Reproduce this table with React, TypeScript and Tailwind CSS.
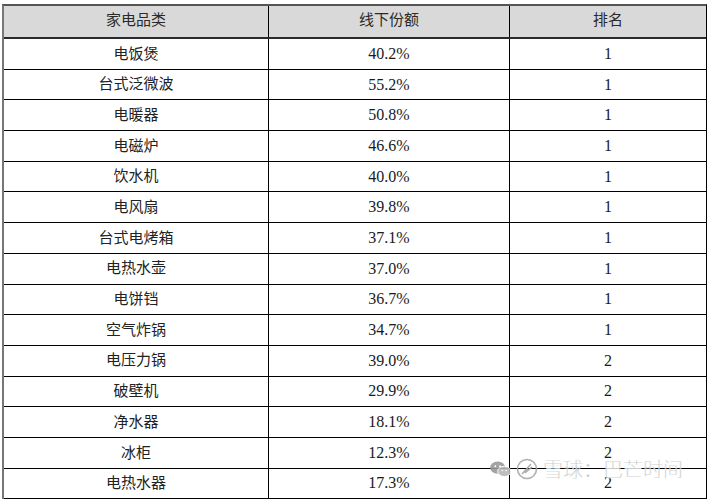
import React from "react"

const rows: [string, string, string][] = [
  ["电饭煲", "40.2%", "1"],
  ["台式泛微波", "55.2%", "1"],
  ["电暖器", "50.8%", "1"],
  ["电磁炉", "46.6%", "1"],
  ["饮水机", "40.0%", "1"],
  ["电风扇", "39.8%", "1"],
  ["台式电烤箱", "37.1%", "1"],
  ["电热水壶", "37.0%", "1"],
  ["电饼铛", "36.7%", "1"],
  ["空气炸锅", "34.7%", "1"],
  ["电压力锅", "39.0%", "2"],
  ["破壁机", "29.9%", "2"],
  ["净水器", "18.1%", "2"],
  ["冰柜", "12.3%", "2"],
  ["电热水器", "17.3%", "2"],
]

const font = { fontFamily: '"Liberation Serif", "Noto Sans CJK SC", serif' }

function Watermark() {
  return (
    <div className="absolute left-[490px] top-[458px] flex items-center gap-[5px] text-[#b4b4b4] opacity-90 pointer-events-none">
      {/* wechat bubbles */}
      <svg width="21" height="17" viewBox="0 0 22 18">
        <ellipse cx="8" cy="7" rx="8" ry="6.5" fill="#9a9a9a" />
        <ellipse cx="15" cy="11" rx="7" ry="5.5" fill="#b8b8b8" stroke="#fff" strokeWidth="1" />
        <circle cx="5.5" cy="5.5" r="1" fill="#fff" />
        <circle cx="10.5" cy="5.5" r="1" fill="#fff" />
        <circle cx="13" cy="10" r="0.8" fill="#fff" />
        <circle cx="17" cy="10" r="0.8" fill="#fff" />
      </svg>
      {/* snowball logo */}
      <svg width="22" height="22" viewBox="0 0 22 22">
        <circle cx="11" cy="11" r="9.5" fill="none" stroke="#a8a8a8" strokeWidth="1.6" />
        <path d="M6 16 L15 6 M9 15 L16 9 M6 16 C9 12 12 13 16 9" fill="none" stroke="#a8a8a8" strokeWidth="1.6" />
      </svg>
      <span
        className="text-[20px] leading-none"
        style={{ fontFamily: '"Noto Sans CJK SC", sans-serif', fontWeight: 300, WebkitTextStroke: "0.3px #fff" }}
      >
        雪球：巴芒时间
      </span>
    </div>
  )
}

export default function App() {
  return (
    <div className="relative w-[708px] h-[500px] bg-white overflow-hidden text-[#1a1a1a]" style={font}>
      <div className="ml-[2px] mt-[4px] w-[705px] border-t-2 border-l-2 border-r border-t-[#555] border-l-[#777] border-r-black">
        {/* header */}
        <div className="grid grid-cols-[265px_241px_1fr] h-[33px] bg-[#d9d9d9] border-b-2 border-b-[#2a2a2a] text-[15px] text-[#2a2a2a]">
          <div className="flex items-center justify-center border-r border-black pb-[2px]">家电品类</div>
          <div className="flex items-center justify-center border-r border-black pb-[2px]">线下份额</div>
          <div className="flex items-center justify-center pb-[2px]">排名</div>
        </div>
        {rows.map(([name, share, rank]) => (
          <div key={name} className="grid grid-cols-[265px_241px_1fr] h-[30.7px] border-b border-black">
            <div className="flex items-center justify-center border-r border-black text-[15px] text-[#222]">{name}</div>
            <div className="flex items-center justify-center border-r border-black text-[16px]">{share}</div>
            <div className="flex items-center justify-center text-[16px]">{rank}</div>
          </div>
        ))}
      </div>
      <Watermark />
    </div>
  )
}
